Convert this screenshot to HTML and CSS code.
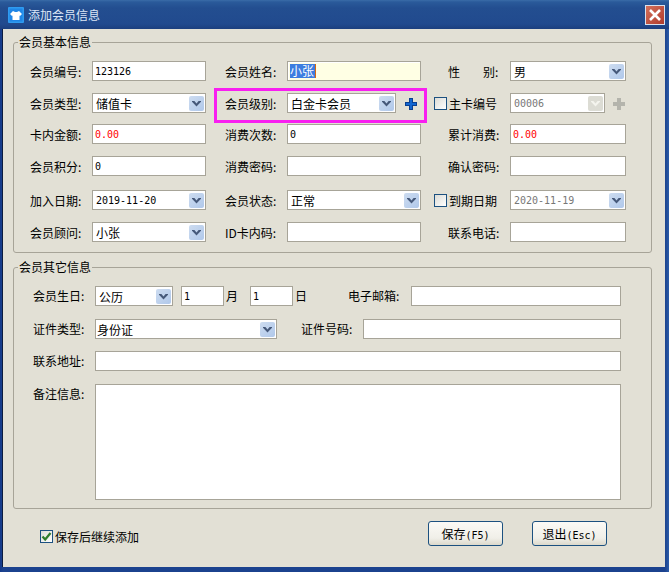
FILE: index.html
```html
<!DOCTYPE html>
<html lang="zh-CN">

<head>
    <meta charset="UTF-8" />
    <title>添加会员信息</title>
    <link rel="stylesheet" href="styles.css">
</head>

<body>
    <div class="window">
        <div class="titlebar">
            <svg class="app-icon" width="16" height="16" viewBox="0 0 16 16">
                <rect width="16" height="16" rx="1" fill="#2f9bf0" />
                <rect x="1.500" y="1.500" width="13" height="13" fill="#1f86e6" />
                <path d="M5 4 L7 5 H9 L11 4 L14 7 L12 9 L11.500 8.500 V13 H4.500 V8.500 L4 9 L2 7 Z" fill="#fff" />
            </svg>
            <span class="title-text">添加会员信息</span>
            <div class="close-btn">
                <svg width="14" height="14" viewBox="0 0 14 14">
                    <path d="M2 2 L12 12 M12 2 L2 12" stroke="#fff" stroke-width="2.600" />
                </svg>
            </div>
        </div>

        <div class="content">
            <fieldset class="group group-base">
                <legend>会员基本信息</legend>
                <div class="highlight"></div>

                <label class="lbl">会员编号:</label>
                <input class="field mono" type="text" value="123126" />
                <label class="lbl">会员姓名:</label>
                <div class="field name-field"><span class="selected">小张</span></div>
                <label class="lbl">性<span class="spread"></span>别:</label>
                <div class="field select"><span>男</span><i class="arrow"></i></div>

                <label class="lbl">会员类型:</label>
                <div class="field select"><span>储值卡</span><i class="arrow"></i></div>
                <label class="lbl">会员级别:</label>
                <div class="with-add">
                    <div class="field select level"><span>白金卡会员</span><i class="arrow"></i></div>
                    <svg class="plus plus-on" width="12" height="12" viewBox="0 0 12 12">
                        <path d="M4 0 H8 V4 H12 V8 H8 V12 H4 V8 H0 V4 H4 Z" fill="#0a3f90" />
                        <path d="M5 1 H7 V5 H11 V7 H7 V11 H5 V7 H1 V5 H5 Z" fill="#1266d0" />
                    </svg>
                </div>
                <label class="lbl check-lbl"><i class="check"></i>主卡编号</label>
                <div class="with-add">
                    <div class="field select disabled card-no"><span class="mono">00006</span><i class="arrow"></i></div>
                    <svg class="plus" width="12" height="12" viewBox="0 0 12 12">
                        <path d="M4 0 H8 V4 H12 V8 H8 V12 H4 V8 H0 V4 H4 Z" fill="#b4b4ac" />
                    </svg>
                </div>

                <label class="lbl">卡内金额:</label>
                <input class="field mono red" type="text" value="0.00" />
                <label class="lbl">消费次数:</label>
                <input class="field mono" type="text" value="0" />
                <label class="lbl">累计消费:</label>
                <input class="field mono red" type="text" value="0.00" />

                <label class="lbl">会员积分:</label>
                <input class="field mono" type="text" value="0" />
                <label class="lbl">消费密码:</label>
                <input class="field" type="text" />
                <label class="lbl">确认密码:</label>
                <input class="field" type="text" />

                <label class="lbl">加入日期:</label>
                <div class="field select"><span class="mono">2019-11-20</span><i class="arrow"></i></div>
                <label class="lbl">会员状态:</label>
                <div class="field select"><span>正常</span><i class="arrow"></i></div>
                <label class="lbl check-lbl"><i class="check"></i>到期日期</label>
                <div class="field select muted"><span class="mono">2020-11-19</span><i class="arrow"></i></div>

                <label class="lbl">会员顾问:</label>
                <div class="field select"><span>小张</span><i class="arrow"></i></div>
                <label class="lbl">ID卡内码:</label>
                <input class="field" type="text" />
                <label class="lbl">联系电话:</label>
                <input class="field" type="text" />
            </fieldset>

            <fieldset class="group group-other">
                <legend>会员其它信息</legend>

                <div class="row">
                    <label class="lbl lbl-other">会员生日:</label>
                    <div class="field select calendar"><span>公历</span><i class="arrow"></i></div>
                    <input class="field mono small month" type="text" value="1" />
                    <span class="unit">月</span>
                    <input class="field mono small" type="text" value="1" />
                    <span class="unit day">日</span>
                    <label class="lbl email-lbl">电子邮箱:</label>
                    <input class="field grow" type="text" />
                </div>

                <div class="row row-b">
                    <label class="lbl lbl-other">证件类型:</label>
                    <div class="field select id-type"><span>身份证</span><i class="arrow"></i></div>
                    <label class="lbl id-no-lbl">证件号码:</label>
                    <input class="field grow" type="text" />
                </div>

                <div class="row">
                    <label class="lbl lbl-other">联系地址:</label>
                    <input class="field grow" type="text" />
                </div>

                <div class="row">
                    <label class="lbl lbl-other">备注信息:</label>
                    <textarea class="field grow note"></textarea>
                </div>
            </fieldset>

            <div class="footer">
                <label class="lbl check-lbl keep-adding">
                    <i class="check">
                        <svg width="11" height="11" viewBox="0 0 11 11">
                            <path d="M1.500 5.500 L4.200 8.500 L9.500 2" fill="none" stroke="#2f7d2c" stroke-width="2.200" />
                        </svg>
                    </i>保存后继续添加
                </label>
                <div class="buttons">
                    <button class="btn" type="button">保存<span class="mono">(F5)</span></button>
                    <button class="btn" type="button">退出<span class="mono">(Esc)</span></button>
                </div>
            </div>
        </div>
    </div>
</body>

</html>
```

FILE: styles.css
```css
* {
    box-sizing: border-box;
}

body {
    margin: 0;
    width: 669px;
    height: 572px;
    overflow: hidden;
    font-family: "Noto Sans CJK SC", "Liberation Sans", sans-serif;
    font-size: 12px;
    color: #000;
}

.window {
    width: 669px;
    height: 572px;
    display: flex;
    flex-direction: column;
    background: linear-gradient(90deg, #14398a 0, #1b428e 3px, #1b428e 665px, #2c5ca8 669px);
}

.titlebar {
    height: 29px;
    flex: none;
    display: flex;
    align-items: center;
    padding: 0 4px 0 8px;
    background: linear-gradient(#3a6ca8 0, #2a5a9a 2px, #234e90 8px, #214a8e 24px, #1c3f7e 29px);
}

.app-icon {
    flex: none;
}

.title-text {
    margin-left: 4px;
    color: #dce6f6;
    line-height: 29px;
}

.close-btn {
    margin-left: auto;
    width: 20px;
    height: 20px;
    display: flex;
    align-items: center;
    justify-content: center;
    background: linear-gradient(135deg, #d2705c, #b03c2c);
    border: 1px solid #d8e2ee;
}

.content {
    flex: none;
    width: 662px;
    height: 538px;
    margin-left: 3px;
    padding: 6px 0 0 10px;
    background: #e2e0d5;
    box-shadow: -1px 0 0 #0c1c40;
}

fieldset.group {
    margin: 0;
    min-width: 0;
    width: 639px;
    border: 1px solid #a7a498;
    border-radius: 3px;
}

.group legend {
    padding: 0 1px;
    line-height: 14px;
}

.group-base {
    position: relative;
    height: 218px;
    padding: 12px 0 0 16px;
    display: grid;
    grid-template-columns: 62px 114px 81px 134px 89px 116px;
    grid-template-rows: 32px 31px 32px 34px 32px 20px;
    align-items: start;
}

.group-base legend {
    margin-left: -12px;
}

.group-base .lbl:nth-of-type(3n+2),
.group-base .lbl:nth-of-type(3n) {
    justify-self: end;
    width: 62px;
}

.group-base .check-lbl.check-lbl {
    width: 76px;
}

fieldset.group-other {
    height: 249px;
    margin-top: 7px;
    padding: 12px 30px 0 19px;
}

.group-other legend {
    margin-left: -15px;
}

.lbl {
    display: flex;
    align-items: center;
    white-space: nowrap;
    height: 20px;
}

.spread {
    width: 23px;
}

.field {
    height: 20px;
    width: 100%;
    margin: 0;
    padding: 0 2px;
    background: #fff;
    border: 1px solid #a7a498;
    border-radius: 0;
    outline: none;
    font-family: "Noto Sans CJK SC", sans-serif;
    font-size: 12px;
    color: #000;
}

/* half-width digits, 6px a character */
.mono {
    font-family: "DejaVu Sans Mono", "Liberation Mono", monospace;
    font-size: 10px;
}

.red {
    color: #f00;
}

.name-field {
    display: flex;
    align-items: center;
    background: #ffffe4;
    box-shadow: inset 1px 1px 0 #fff;
}

.selected {
    padding-right: 1px;
    background: #3d7de0;
    border-right: 1px solid #d86a10;
    color: #fff;
    line-height: 14px;
}

.select {
    display: flex;
    align-items: center;
    justify-content: space-between;
    padding: 0 1px 0 3px;
}

.arrow {
    flex: none;
    position: relative;
    width: 15px;
    height: 15px;
    background: linear-gradient(135deg, #cddcf0, #b0c8ea);
    border-radius: 2px;
}

.arrow::after {
    content: "";
    position: absolute;
    left: 3px;
    top: 5px;
    width: 9px;
    height: 6px;
    background: #46597a;
    clip-path: polygon(0 0, 22% 0, 50% 50%, 78% 0, 100% 0, 100% 20%, 50% 100%, 0 20%);
}

.with-add {
    display: flex;
    align-items: center;
}

.level {
    width: 109px;
    flex: none;
}

.card-no {
    width: 95px;
    flex: none;
}

.plus {
    flex: none;
    margin: 2px 0 0 8px;
}

.plus-on {
    margin-left: 9px;
}

.disabled span,
.muted span {
    color: #777;
}

.disabled .arrow {
    background: #dcdcd4;
}

.disabled .arrow::after {
    background: #f4f4ee;
}

.check-lbl {
    gap: 2px;
    justify-content: flex-start;
}

.check {
    flex: none;
    width: 13px;
    height: 13px;
    display: flex;
    align-items: center;
    justify-content: center;
    border: 1px solid #1c5180;
    background: linear-gradient(135deg, #dcdcd6, #fff);
}

/* pink box drawn around the level row */
.highlight {
    position: absolute;
    left: 200px;
    top: 39px;
    width: 213px;
    height: 35px;
    border: 3px solid #f81ff0;
    pointer-events: none;
}

.row {
    display: flex;
    align-items: flex-start;
    margin-bottom: 13px;
}

.row-b {
    margin-bottom: 12px;
}

.lbl-other {
    width: 62px;
    height: 18px;
    flex: none;
}

.calendar {
    width: 78px;
    flex: none;
}

.small {
    width: 43px;
    flex: none;
}

.month {
    margin-left: 8px;
}

.unit {
    width: 26px;
    flex: none;
    line-height: 20px;
    padding-left: 2px;
}

.day {
    width: auto;
}

.email-lbl {
    margin-left: 41px;
    width: 63px;
    height: 18px;
    flex: none;
}

.id-type {
    width: 182px;
    flex: none;
    padding-left: 1px;
}

.id-no-lbl {
    margin-left: 24px;
    width: 62px;
    height: 18px;
    flex: none;
}

.grow {
    flex: 1;
    width: auto;
    min-width: 0;
}

.note {
    height: 116px;
    resize: none;
}

.footer {
    display: flex;
    justify-content: space-between;
    align-items: flex-start;
    margin-top: 12px;
    padding-left: 27px;
    width: 594px;
}

.keep-adding {
    margin-top: 9px;
    height: 13px;
}

.buttons {
    display: flex;
    gap: 29px;
}

.btn {
    width: 75px;
    height: 25px;
    padding: 0;
    background: linear-gradient(#fbfaf6, #f0efe8 70%, #dcd9cc);
    border: 1px solid #1c5180;
    border-radius: 3px;
    font-family: "Noto Sans CJK SC", sans-serif;
    font-size: 12px;
    color: #000;
}
```
